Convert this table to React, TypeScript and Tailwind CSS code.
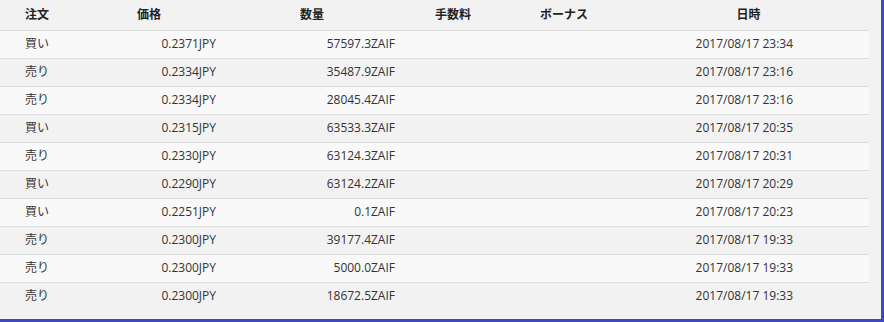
import React from 'react';

type Trade = { side: string; price: string; amount: string; date: string };

const TRADES: Trade[] = [
  { side: '買い', price: '0.2371JPY', amount: '57597.3ZAIF', date: '2017/08/17 23:34' },
  { side: '売り', price: '0.2334JPY', amount: '35487.9ZAIF', date: '2017/08/17 23:16' },
  { side: '売り', price: '0.2334JPY', amount: '28045.4ZAIF', date: '2017/08/17 23:16' },
  { side: '買い', price: '0.2315JPY', amount: '63533.3ZAIF', date: '2017/08/17 20:35' },
  { side: '売り', price: '0.2330JPY', amount: '63124.3ZAIF', date: '2017/08/17 20:31' },
  { side: '買い', price: '0.2290JPY', amount: '63124.2ZAIF', date: '2017/08/17 20:29' },
  { side: '買い', price: '0.2251JPY', amount: '0.1ZAIF', date: '2017/08/17 20:23' },
  { side: '売り', price: '0.2300JPY', amount: '39177.4ZAIF', date: '2017/08/17 19:33' },
  { side: '売り', price: '0.2300JPY', amount: '5000.0ZAIF', date: '2017/08/17 19:33' },
  { side: '売り', price: '0.2300JPY', amount: '18672.5ZAIF', date: '2017/08/17 19:33' },
];

function App() {
  return (
    <div
      className="w-[884px] h-[322px] bg-[#3f48c2] overflow-hidden"
      style={{ fontFamily: '"Open Sans", "Noto Sans CJK JP", sans-serif' }}
    >
      <div className="w-[881px] h-[319px] bg-[#f2f2f2] text-[12px] text-[#333]">
        <div className="w-[869px]">
          {/* header */}
          <div className="flex h-[30px] items-center font-bold text-[#222]">
            <div className="w-[125px] pl-[25px]">注文</div>
            <div className="w-[163px] pl-[12px]">価格</div>
            <div className="w-[147px] pl-[12px]">数量</div>
            <div className="w-[105px]">手数料</div>
            <div className="w-[100px]">ボーナス</div>
            <div className="flex-1 text-center pr-[12px]">日時</div>
          </div>
          {/* rows */}
          {TRADES.map((t, i) => (
            <div
              key={i}
              className={`flex h-[28px] items-center pb-[1px] border-t border-[#dcdcdc] ${
                i % 2 === 0 ? 'bg-[#f9f9f9]' : 'bg-[#f2f2f2]'
              }`}
            >
              <div className="w-[125px] pl-[25px]">{t.side}</div>
              <div className="w-[91px] text-right">{t.price}</div>
              <div className="w-[179px] text-right">{t.amount}</div>
              <div className="w-[245px]" />
              <div className="w-[153px] text-right">{t.date}</div>
            </div>
          ))}
        </div>
      </div>
    </div>
  );
}

export default App;
